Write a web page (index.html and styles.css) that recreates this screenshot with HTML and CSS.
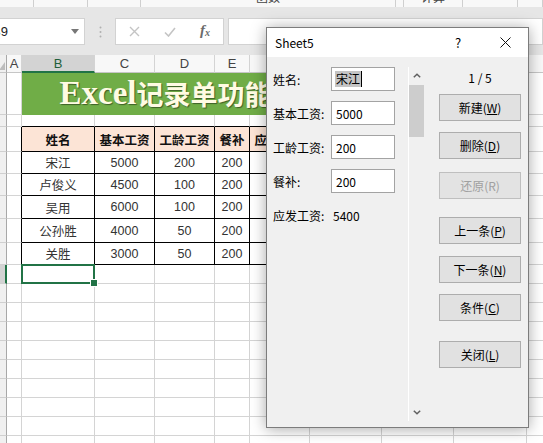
FILE: index.html
```html
<!DOCTYPE html>
<html lang="zh-CN">
<head>
<meta charset="utf-8">
<title>Excel 记录单</title>
<link rel="stylesheet" href="styles.css">
</head>
<body>
<div class="app">
  <div class="topbar">
    <div class="ribbon">
      <div class="rg"></div>
      <div class="rg"></div>
      <div class="rg"></div>
      <div class="rg"><span class="rlabel">函数</span></div>
      <div class="rg"></div>
      <div class="rg"><span class="rlabel">计算</span></div>
      <div class="rg"></div>
      <div class="rg"></div>
    </div>
    <div class="fbar">
      <div class="namebox"><span>B9</span>
        <svg class="dd" width="8" height="5" viewBox="0 0 8 5"><path d="M0 0H8L4 5Z" fill="#777"/></svg>
      </div>
      <svg class="dots" width="3" height="12" viewBox="0 0 3 12"><circle cx="1.5" cy="1.5" r="1" fill="#b0b0b0"/><circle cx="1.5" cy="6" r="1" fill="#b0b0b0"/><circle cx="1.5" cy="10.5" r="1" fill="#b0b0b0"/></svg>
      <div class="fxbox">
        <svg class="ic-x" width="11" height="11" viewBox="0 0 11 11"><path d="M1 1L10 10M10 1L1 10" stroke="#c4c4c4" stroke-width="1.4" fill="none"/></svg>
        <svg class="ic-ok" width="12" height="10" viewBox="0 0 12 10"><path d="M1 5.5L4.5 9L11 1" stroke="#c4c4c4" stroke-width="1.6" fill="none"/></svg>
        <span class="ic-fx">f<sub>x</sub></span>
      </div>
      <div class="finput"></div>
    </div>
  </div>

  <div class="sheet">
    <div class="row colhead">
      <div class="c rh corner"><svg width="6" height="8" viewBox="0 0 6 8"><path d="M6 0V8H0Z" fill="#bdbdbd"/></svg></div>
      <div class="c ch">A</div>
      <div class="c ch ch-sel">B</div>
      <div class="c ch">C</div>
      <div class="c ch">D</div>
      <div class="c ch">E</div>
      <div class="c ch">F</div>
      <div class="c ch">G</div>
      <div class="c ch">H</div>
      <div class="c ch">I</div>
      <div class="c ch">J</div>
    </div>

    <div class="row title-row h-42">
      <div class="c rh"><span>1</span></div>
      <div class="c"></div>
      <div class="c title"><span class="t-en">Excel</span><span class="t-cn">记录单功能</span></div>
      <div class="c"></div><div class="c"></div><div class="c"></div><div class="c"></div>
    </div>

    <div class="row h-12">
      <div class="c rh"><span>2</span></div>
      <div class="c"></div>
      <div class="c tt"></div><div class="c tt"></div><div class="c tt"></div><div class="c tt"></div><div class="c tt"></div>
      <div class="c"></div><div class="c"></div><div class="c"></div><div class="c"></div>
    </div>

    <div class="row h-25">
      <div class="c rh"><span>3</span></div>
      <div class="c tl"></div>
      <div class="c t th">姓名</div>
      <div class="c t th">基本工资</div>
      <div class="c t th">工龄工资</div>
      <div class="c t th">餐补</div>
      <div class="c t th">应发工资</div>
      <div class="c"></div><div class="c"></div><div class="c"></div><div class="c"></div>
    </div>

    <div class="row h-22">
      <div class="c rh"><span>4</span></div>
      <div class="c tl"></div>
      <div class="c t">宋江</div><div class="c t">5000</div><div class="c t">200</div><div class="c t">200</div><div class="c t"></div>
      <div class="c"></div><div class="c"></div><div class="c"></div><div class="c"></div>
    </div>
    <div class="row h-22">
      <div class="c rh"><span>5</span></div>
      <div class="c tl"></div>
      <div class="c t">卢俊义</div><div class="c t">4500</div><div class="c t">100</div><div class="c t">200</div><div class="c t"></div>
      <div class="c"></div><div class="c"></div><div class="c"></div><div class="c"></div>
    </div>
    <div class="row h-23">
      <div class="c rh"><span>6</span></div>
      <div class="c tl"></div>
      <div class="c t">吴用</div><div class="c t">6000</div><div class="c t">100</div><div class="c t">200</div><div class="c t"></div>
      <div class="c"></div><div class="c"></div><div class="c"></div><div class="c"></div>
    </div>
    <div class="row h-24">
      <div class="c rh"><span>7</span></div>
      <div class="c tl"></div>
      <div class="c t">公孙胜</div><div class="c t">4000</div><div class="c t">50</div><div class="c t">200</div><div class="c t"></div>
      <div class="c"></div><div class="c"></div><div class="c"></div><div class="c"></div>
    </div>
    <div class="row h-22">
      <div class="c rh"><span>8</span></div>
      <div class="c tl"></div>
      <div class="c t">关胜</div><div class="c t">3000</div><div class="c t">50</div><div class="c t">200</div><div class="c t"></div>
      <div class="c"></div><div class="c"></div><div class="c"></div><div class="c"></div>
    </div>

    <div class="row h-19">
      <div class="c rh rh-sel"><span>9</span></div>
      <div class="c"></div>
      <div class="c selcell"></div>
      <div class="c"></div><div class="c"></div><div class="c"></div><div class="c"></div><div class="c"></div><div class="c"></div><div class="c"></div><div class="c"></div>
    </div>
    <div class="row h-19">
      <div class="c rh"><span>10</span></div>
      <div class="c"></div><div class="c"></div><div class="c"></div><div class="c"></div><div class="c"></div><div class="c"></div><div class="c"></div><div class="c"></div><div class="c"></div><div class="c"></div>
    </div>
    <div class="row h-19">
      <div class="c rh"><span>11</span></div>
      <div class="c"></div><div class="c"></div><div class="c"></div><div class="c"></div><div class="c"></div><div class="c"></div><div class="c"></div><div class="c"></div><div class="c"></div><div class="c"></div>
    </div>
    <div class="row h-19">
      <div class="c rh"><span>12</span></div>
      <div class="c"></div><div class="c"></div><div class="c"></div><div class="c"></div><div class="c"></div><div class="c"></div><div class="c"></div><div class="c"></div><div class="c"></div><div class="c"></div>
    </div>
    <div class="row h-19">
      <div class="c rh"><span>13</span></div>
      <div class="c"></div><div class="c"></div><div class="c"></div><div class="c"></div><div class="c"></div><div class="c"></div><div class="c"></div><div class="c"></div><div class="c"></div><div class="c"></div>
    </div>
    <div class="row h-19">
      <div class="c rh"><span>14</span></div>
      <div class="c"></div><div class="c"></div><div class="c"></div><div class="c"></div><div class="c"></div><div class="c"></div><div class="c"></div><div class="c"></div><div class="c"></div><div class="c"></div>
    </div>
    <div class="row h-19">
      <div class="c rh"><span>15</span></div>
      <div class="c"></div><div class="c"></div><div class="c"></div><div class="c"></div><div class="c"></div><div class="c"></div><div class="c"></div><div class="c"></div><div class="c"></div><div class="c"></div>
    </div>
    <div class="row h-19">
      <div class="c rh"><span>16</span></div>
      <div class="c"></div><div class="c"></div><div class="c"></div><div class="c"></div><div class="c"></div><div class="c"></div><div class="c"></div><div class="c"></div><div class="c"></div><div class="c"></div>
    </div>
    <div class="row h-19">
      <div class="c rh"><span>17</span></div>
      <div class="c"></div><div class="c"></div><div class="c"></div><div class="c"></div><div class="c"></div><div class="c"></div><div class="c"></div><div class="c"></div><div class="c"></div><div class="c"></div>
    </div>
    <div class="row h-19">
      <div class="c rh"><span>18</span></div>
      <div class="c"></div><div class="c"></div><div class="c"></div><div class="c"></div><div class="c"></div><div class="c"></div><div class="c"></div><div class="c"></div><div class="c"></div><div class="c"></div>
    </div>
  </div>

  <div class="dialog">
    <div class="dlg-title">
      <span class="dlg-name">Sheet5</span>
      <span class="dlg-help">?</span>
      <span class="dlg-close"><svg width="11" height="11" viewBox="0 0 11 11"><path d="M0.5 0.5L10.5 10.5M10.5 0.5L0.5 10.5" stroke="#111" stroke-width="1" fill="none"/></svg></span>
    </div>
    <div class="dlg-body">
      <div class="fields">
        <div class="field"><label>姓名:</label><div class="input"><span class="seltext">宋江</span><span class="caret"></span></div></div>
        <div class="field"><label>基本工资:</label><div class="input"><span class="itext">5000</span></div></div>
        <div class="field"><label>工龄工资:</label><div class="input"><span class="itext">200</span></div></div>
        <div class="field"><label>餐补:</label><div class="input"><span class="itext">200</span></div></div>
        <div class="field"><label>应发工资:</label><span class="value">5400</span></div>
      </div>
      <div class="vscroll">
        <div class="sarrow"><svg width="8" height="5" viewBox="0 0 8 5"><path d="M0.8 4.3L4 1.2L7.2 4.3" stroke="#606060" stroke-width="1.5" fill="none"/></svg></div>
        <div class="thumb"></div>
        <div class="sspace"></div>
        <div class="sarrow"><svg width="8" height="5" viewBox="0 0 8 5"><path d="M0.8 0.7L4 3.8L7.2 0.7" stroke="#606060" stroke-width="1.5" fill="none"/></svg></div>
      </div>
      <div class="buttons">
        <div class="counter">1 / 5</div>
        <button class="btn b-new">新建(<u>W</u>)</button>
        <button class="btn b-del">删除(<u>D</u>)</button>
        <button class="btn b-undo" disabled>还原(R)</button>
        <button class="btn b-prev">上一条(<u>P</u>)</button>
        <button class="btn b-next">下一条(<u>N</u>)</button>
        <button class="btn b-crit">条件(<u>C</u>)</button>
        <button class="btn b-close">关闭(<u>L</u>)</button>
      </div>
    </div>
  </div>
</div>
</body>
</html>
```

FILE: styles.css
```css
* { box-sizing: border-box; }
html, body { margin: 0; padding: 0; }
body {
  width: 543px;
  height: 443px;
  overflow: hidden;
  background: #fff;
  font-family: "Noto Sans CJK SC", "Liberation Sans", sans-serif;
}
.app {
  position: relative;
  width: 543px;
  height: 443px;
  overflow: hidden;
}

/* ---------- top: ribbon remnant + formula bar ---------- */
.topbar {
  height: 55px;
  background: #e6e6e6;
  display: flex;
  flex-direction: column;
}
.ribbon {
  height: 7px;
  flex: none;
  background: #f8f8f8;
  display: grid;
  grid-template-columns: 34px 54px 53px 255px 8px 59px 55px 1fr;
  overflow: hidden;
}
.rg {
  border-right: 1px solid #cfcfcf;
  overflow: hidden;
  text-align: center;
}
.rlabel {
  display: block;
  margin-top: -10px;
  font-size: 12px;
  line-height: 14px;
  color: #444;
}
.fbar {
  margin-top: 11px;
  height: 27px;
  display: flex;
  align-items: stretch;
}
.namebox {
  margin-left: -12px;
  width: 97px;
  flex: none;
  background: #fff;
  border: 1px solid #d2d2d2;
  display: flex;
  align-items: center;
  padding-left: 3px;
  font-family: "Liberation Sans", sans-serif;
  font-size: 13px;
  color: #222;
}
.namebox .dd { margin-left: auto; margin-right: 5px; }
.dots { flex: none; align-self: center; margin-left: 14px; }
.fxbox {
  margin-left: 13px;
  width: 109px;
  flex: none;
  background: #fff;
  border: 1px solid #d2d2d2;
  display: flex;
  align-items: center;
  padding-left: 13px;
}
.ic-x { flex: none; }
.ic-ok { flex: none; margin-left: 24px; }
.ic-fx {
  margin-left: 24px;
  font-family: "Liberation Serif", serif;
  font-style: italic;
  font-weight: bold;
  font-size: 15px;
  color: #6b6b6b;
  line-height: 14px;
}
.ic-fx sub { font-size: 10px; vertical-align: -1px; }
.finput {
  margin-left: 4px;
  flex: 1;
  background: #fff;
  border: 1px solid #d2d2d2;
}

/* ---------- sheet grid ---------- */
.sheet { display: flex; flex-direction: column; }
.row { display: flex; flex: none; }
.c {
  flex: none;
  height: 100%;
  border-right: 1px solid #d4d4d4;
  border-bottom: 1px solid #d4d4d4;
  display: flex;
  align-items: center;
  justify-content: center;
  font-family: "Liberation Sans", "Noto Sans CJK SC", sans-serif;
  font-size: 12.5px;
  color: #333;
  white-space: nowrap;
}
.row > .c:nth-child(1) { width: 7px; }
.row > .c:nth-child(2) { width: 15px; }
.row > .c:nth-child(3) { width: 73px; }
.row > .c:nth-child(4) { width: 60px; }
.row > .c:nth-child(5) { width: 60px; }
.row > .c:nth-child(6) { width: 35px; }
.row > .c:nth-child(7) { width: 60px; }
.row > .c:nth-child(8) { width: 72px; }
.row > .c:nth-child(9) { width: 72px; }
.row > .c:nth-child(10) { width: 73px; }
.row > .c:nth-child(11) { width: 80px; }
.title-row > .c:nth-child(3) { width: 288px; }
.title-row > .c:nth-child(4) { width: 72px; }
.title-row > .c:nth-child(5) { width: 72px; }
.title-row > .c:nth-child(6) { width: 73px; }
.title-row > .c:nth-child(7) { width: 80px; }

.h-42 { height: 42px; }
.h-12 { height: 12px; }
.h-25 { height: 25px; }
.h-22 { height: 22px; }
.h-23 { height: 23px; }
.h-24 { height: 24px; }
.h-19 { height: 19px; }

.colhead { height: 18px; }
.ch {
  background: #f8f8f8;
  border-right-color: #d4d4d4;
  border-bottom-color: #c6c6c6;
  font-size: 13px;
  color: #444;
}
.ch-sel {
  background: #d3d3d3;
  border-bottom: 2px solid #217346;
  color: #1f5f3a;
}
.rh {
  background: #f0f0f0;
  border-right: 1px solid #a8a8a8;
  border-bottom-color: #d0d0d0;
  justify-content: flex-end;
  overflow: hidden;
  font-size: 11px;
  color: #555;
}
.rh span { flex: none; width: 26px; text-align: center; }
.corner { align-items: flex-end; padding-bottom: 2px; border-bottom-color: #c6c6c6; }
.corner svg { flex: none; margin-right: 1px; }
.rh-sel {
  background: #d3d3d3;
  border-right: 2px solid #217346;
}

.title {
  background: #70ad47;
  border-right-color: #70ad47;
  border-bottom-color: #70ad47;
  color: #fffbe3;
  font-weight: bold;
  text-shadow: 1px 1px 1px rgba(0, 0, 0, 0.45);
  overflow: visible;
}
.t-en { font-family: "Liberation Serif", serif; font-size: 33px; }
.t-cn { font-family: "Noto Sans CJK SC", sans-serif; font-size: 27px; }

.tt { border-bottom-color: #000; }
.tl { border-right-color: #000; }
.t {
  border-right-color: #000;
  border-bottom-color: #000;
  color: #333;
}
.th {
  background: #fce4d6;
  font-family: "Noto Sans CJK SC", sans-serif;
  font-weight: bold;
  font-size: 12.5px;
  color: #111;
}

.selcell { position: relative; }
.selcell::before {
  content: "";
  position: absolute;
  left: -1px;
  top: -1px;
  right: -1px;
  bottom: -1px;
  border: 2px solid #217346;
}
.selcell::after {
  content: "";
  position: absolute;
  right: -4px;
  bottom: -4px;
  width: 6px;
  height: 6px;
  background: #217346;
  border: 1px solid #fff;
}

/* ---------- record form dialog ---------- */
.dialog {
  position: absolute;
  left: 266px;
  top: 27px;
  width: 263px;
  height: 401px;
  background: #f0f0f0;
  border: 1px solid #7c7c7c;
  box-shadow: 0 1px 14px rgba(0, 0, 0, 0.35);
  display: flex;
  flex-direction: column;
  font-family: "Noto Sans CJK SC", "Liberation Sans", sans-serif;
  font-size: 12px;
  color: #000;
}
.dlg-title {
  height: 29px;
  flex: none;
  background: #fff;
  display: flex;
  align-items: center;
}
.dlg-name { flex: 1; padding-left: 8px; }
.dlg-help { width: 30px; margin-right: 9px; text-align: center; font-size: 13px; }
.dlg-close {
  width: 46px;
  height: 29px;
  display: flex;
  align-items: center;
  justify-content: center;
}
.dlg-body { flex: 1; display: flex; }

.fields {
  width: 141px;
  flex: none;
  padding: 10px 0 0 6px;
  display: flex;
  flex-direction: column;
  gap: 10px;
}
.field { height: 24px; display: flex; align-items: center; }
.field label { width: 58px; flex: none; }
.input {
  width: 64px;
  height: 24px;
  flex: none;
  background: #fff;
  border: 1px solid #a3a3a3;
  display: flex;
  align-items: center;
  padding-left: 3px;
}
.itext { padding-left: 1px; }
.seltext { background: #c4c4c4; padding: 0 1px; line-height: 16px; }
.caret { width: 1px; height: 16px; background: #000; }
.value { padding-left: 2px; }

.vscroll {
  width: 16px;
  flex: none;
  margin: 10px 0 6px;
  border-left: 1px solid #fff;
  display: flex;
  flex-direction: column;
}
.sarrow { height: 17px; flex: none; display: flex; align-items: center; justify-content: center; }
.thumb { height: 52px; flex: none; margin-top: 1px; background: #cdcdcd; }
.sspace { flex: 1; }

.buttons {
  width: 104px;
  flex: none;
  padding: 13px 7px 0 15px;
  display: flex;
  flex-direction: column;
}
.counter { height: 16px; line-height: 16px; text-align: center; }
.btn {
  width: 82px;
  height: 27px;
  flex: none;
  padding: 0;
  background: #e1e1e1;
  border: 1px solid #adadad;
  font-family: inherit;
  font-size: 12px;
  color: #000;
}
.btn:disabled { color: #a0a0a0; border-color: #bfbfbf; background: #e3e3e3; }
.b-new { margin-top: 8px; }
.b-del { margin-top: 11px; }
.b-undo { margin-top: 13px; }
.b-prev { margin-top: 18px; }
.b-next { margin-top: 12px; }
.b-crit { margin-top: 11px; }
.b-close { margin-top: 20px; }
```
